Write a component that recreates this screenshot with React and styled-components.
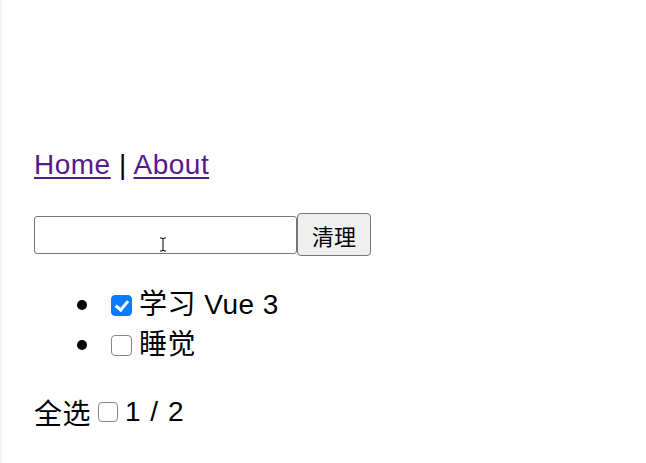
import React, { useState } from 'react'
import styled, { createGlobalStyle } from 'styled-components'

const GlobalStyle = createGlobalStyle`
  html, body {
    margin: 0;
    padding: 0;
    background: #ffffff;
  }
  body {
    font-family: "Liberation Sans", "Noto Sans CJK SC", sans-serif;
    font-size: 28px;
    letter-spacing: 0.5px;
    color: #000;
  }
`

const Page = styled.div`
  min-height: 100vh;
  box-sizing: border-box;
  border-left: 2px solid #f3f3f3;
  padding: 145px 0 0 32px;
`

const Nav = styled.nav`
  height: 40px;
  line-height: 40px;
  margin-bottom: 28px;
  white-space: pre;
`

const NavLink = styled.a`
  color: #551a8b;
  text-decoration: underline;
  text-decoration-thickness: 2px;
  text-underline-offset: 3px;
`

const InputRow = styled.div`
  display: flex;
  align-items: center;
  height: 43px;
  margin-bottom: 29px;
`

const InputWrap = styled.div`
  position: relative;
  display: flex;
`

const TodoInput = styled.input`
  width: 263px;
  height: 38px;
  box-sizing: border-box;
  border: 1px solid #767676;
  border-radius: 3px;
  padding: 0 6px;
  font: inherit;
  font-size: 22px;
  outline: none;
`

const Cursor = styled.svg`
  position: absolute;
  left: 125px;
  top: 21px;
  pointer-events: none;
`

const ClearBtn = styled.button`
  height: 43px;
  padding: 0 14px;
  box-sizing: border-box;
  background: #efefef;
  border: 1px solid #767676;
  border-radius: 4px;
  font-family: "Noto Sans CJK SC", sans-serif;
  font-size: 22px;
  color: #000;
`

const List = styled.ul`
  margin: 0 0 27px;
  padding: 0;
  list-style: none;
`

const Item = styled.li`
  display: flex;
  align-items: center;
  height: 40px;
  line-height: 40px;

  &::before {
    content: '';
    width: 10px;
    height: 10px;
    margin: 0 24px 0 43px;
    border-radius: 50%;
    background: #000;
  }
`

const Row = styled.label`
  display: inline-flex;
  align-items: center;
  gap: ${p => p.gap || 7}px;
`

const Check = styled.input`
  appearance: none;
  -webkit-appearance: none;
  position: relative;
  width: ${p => p.size || 21}px;
  height: ${p => p.size || 21}px;
  margin: 0;
  box-sizing: border-box;
  border: 1.5px solid #858585;
  border-radius: 4px;
  background: #fff;

  &:checked {
    background: #0a7bff;
    border-color: #0a7bff;
  }

  &:checked::after {
    content: '';
    position: absolute;
    left: 6px;
    top: 2px;
    width: 5px;
    height: 10px;
    border: solid #fff;
    border-width: 0 3px 3px 0;
    transform: rotate(40deg);
  }
`

const Footer = styled.div`
  display: flex;
  align-items: center;
  height: 40px;
`

const Count = styled.span`
  margin-left: 7px;
  word-spacing: 1px;
`

export default function App() {
  const [todos, setTodos] = useState([
    { id: 1, title: '学习 Vue 3', done: true },
    { id: 2, title: '睡觉', done: false },
  ])

  const toggle = id =>
    setTodos(todos.map(t => (t.id === id ? { ...t, done: !t.done } : t)))

  const doneCount = todos.filter(t => t.done).length
  const allDone = doneCount === todos.length

  return (
    <Page>
      <GlobalStyle />
      <Nav>
        <NavLink href="#/">Home</NavLink>{' | '}<NavLink href="#/about">About</NavLink>
      </Nav>
      <InputRow>
        <InputWrap>
          <TodoInput type="text" />
          <Cursor width="8" height="15" viewBox="0 0 8 15">
            <path d="M1 1h2l1 1 1-1h2M4 2v11M1 14h2l1-1 1 1h2" fill="none" stroke="#fff" strokeWidth="2.5" />
            <path d="M1 1h2l1 1 1-1h2M4 2v11M1 14h2l1-1 1 1h2" fill="none" stroke="#000" strokeWidth="1" />
          </Cursor>
        </InputWrap>
        <ClearBtn>清理</ClearBtn>
      </InputRow>
      <List>
        {todos.map(t => (
          <Item key={t.id}>
            <Row>
              <Check type="checkbox" checked={t.done} onChange={() => toggle(t.id)} />
              {t.title}
            </Row>
          </Item>
        ))}
      </List>
      <Footer>
        <Row gap={7}>
          全选
          <Check type="checkbox" size={20} checked={allDone} onChange={() => {}} />
        </Row>
        <Count>{doneCount} / {todos.length}</Count>
      </Footer>
    </Page>
  )
}
